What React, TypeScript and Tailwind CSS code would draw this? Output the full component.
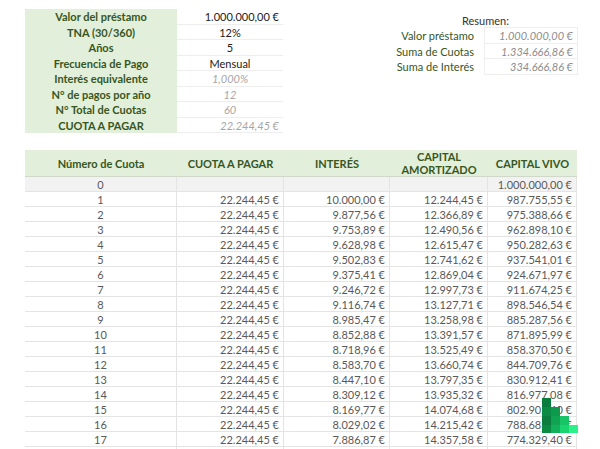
const fmt = (n: number) =>
  n.toFixed(2).replace(".", ",").replace(/\B(?=(\d{3})+(?!\d))/g, ".") + " €";

const P = 1000000;
const r = 0.01;
const cuota = (P * r) / (1 - Math.pow(1 + r, -60));
const rows: { n: number; int: number; am: number; vivo: number }[] = [];
let vivo = P;
for (let i = 1; i <= 18; i++) {
  const int = vivo * r;
  const am = cuota - int;
  vivo = vivo - am;
  rows.push({ n: i, int, am, vivo });
}

const params: [string, string, boolean][] = [
  ["Valor del préstamo", "1.000.000,00 €", false],
  ["TNA (30/360)", "12%", false],
  ["Años", "5", false],
  ["Frecuencia de Pago", "Mensual", false],
  ["Interés equivalente", "1,000%", true],
  ["N° de pagos por año", "12", true],
  ["N° Total de Cuotas", "60", true],
  ["CUOTA A PAGAR", "22.244,45 €", true],
];

const cell = "border-r border-b border-[#e4e4e4] px-1 text-right";

export default function App() {
  return (
    <div
      className="relative w-[600px] h-[449px] overflow-hidden bg-white text-[11px] text-[#595959]"
      style={{ fontFamily: "Lato, 'Liberation Sans', sans-serif" }}
    >
      <div className="flex pt-[9px] pl-[25px]">
        {/* Parámetros */}
        <div className="w-[258px]">
          {params.map(([l, v, it], i) => (
            <div key={i} className="flex h-[15.5px] leading-[15.5px]">
              <div className="w-[152px] bg-[#e2efda] text-center font-bold text-[#375623]">{l}</div>
              <div
                className={
                  "flex-1 border-b border-[#eeeeee] " +
                  (i === 0 || i === 7 ? "text-right pr-1 " : "text-center ") +
                  (it ? "italic text-[#a6a6a6]" : "text-[#222]")
                }
              >
                {v}
              </div>
            </div>
          ))}
        </div>
        {/* Resumen */}
        <div className="ml-[110px] pt-[4px]">
          <div className="text-center pl-[0px] text-[#333] h-[15px]">Resumen:</div>
          {[
            ["Valor préstamo", "1.000.000,00 €"],
            ["Suma de Cuotas", "1.334.666,86 €"],
            ["Suma de Interés", "334.666,86 €"],
          ].map(([l, v]) => (
            <div key={l} className="flex h-[15.5px] leading-[15.5px]">
              <div className="w-[91px] text-right pr-[10px] text-[#375623]">{l}</div>
              <div className="w-[94px] border border-[#eeeeee] -mt-px text-right pr-1 italic text-[#8c8c8c]">{v}</div>
            </div>
          ))}
        </div>
      </div>

      {/* Tabla */}
      <div className="mt-[17px] ml-[25px] w-[552px]">
        <div className="flex h-[27px] bg-[#e2efda] font-bold text-[#375623] text-center leading-[13px] border-b border-[#cfd8c9]">
          <div className="w-[152px] flex items-center justify-center">Número de Cuota</div>
          <div className="w-[107px] flex items-center justify-center">CUOTA A PAGAR</div>
          <div className="w-[106px] flex items-center justify-center">INTERÉS</div>
          <div className="w-[98px] flex items-center justify-center">CAPITAL<br />AMORTIZADO</div>
          <div className="flex-1 flex items-center justify-center">CAPITAL VIVO</div>
        </div>
        <div className="flex h-[15px] leading-[15px] bg-[#f2f2f2]">
          <div className="w-[152px] border-r border-b border-[#e4e4e4] text-center">0</div>
          <div className={"w-[107px] " + cell}></div>
          <div className={"w-[106px] " + cell}></div>
          <div className={"w-[98px] " + cell}></div>
          <div className={"flex-1 " + cell}>{fmt(P)}</div>
        </div>
        {rows.map((r) => (
          <div key={r.n} className="flex h-[15px] leading-[15px]">
            <div className="w-[152px] border-r border-b border-[#e4e4e4] text-center">{r.n}</div>
            <div className={"w-[107px] " + cell}>{fmt(cuota)}</div>
            <div className={"w-[106px] " + cell}>{fmt(r.int)}</div>
            <div className={"w-[98px] " + cell}>{fmt(r.am)}</div>
            <div className={"flex-1 " + cell}>{fmt(r.vivo)}</div>
          </div>
        ))}
      </div>

      {/* logo overlay */}
      <svg className="absolute left-[540px] top-[396px]" width="40" height="40" viewBox="0 0 40 40">
        <rect x="2" y="2" width="9" height="9" fill="#0a7d3e" />
        <rect x="2" y="11" width="9" height="9" fill="#0b8a44" />
        <rect x="2" y="20" width="9" height="9" fill="#0a7d3e" />
        <rect x="2" y="29" width="9" height="8" fill="#0b8a44" />
        <rect x="11" y="11" width="9" height="9" fill="#0e9a4c" />
        <rect x="11" y="20" width="9" height="9" fill="#10a452" />
        <rect x="11" y="29" width="9" height="8" fill="#12b05a" />
        <rect x="20" y="20" width="9" height="9" fill="#17c466" />
        <rect x="20" y="29" width="9" height="8" fill="#1ad46e" />
        <rect x="29" y="29" width="9" height="8" fill="#2cf08a" />
      </svg>
    </div>
  );
}
